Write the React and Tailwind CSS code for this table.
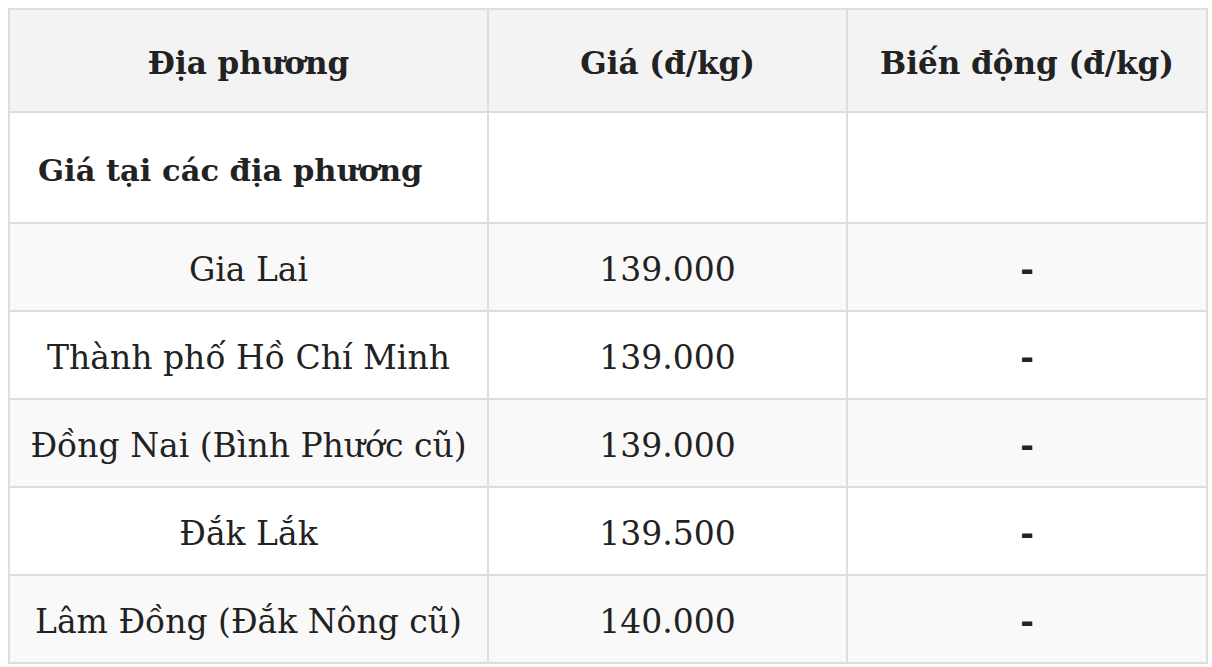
const rows = [
  { name: "Gia Lai", price: "139.000", change: "-" },
  { name: "Thành phố Hồ Chí Minh", price: "139.000", change: "-" },
  { name: "Đồng Nai (Bình Phước cũ)", price: "139.000", change: "-" },
  { name: "Đắk Lắk", price: "139.500", change: "-" },
  { name: "Lâm Đồng (Đắk Nông cũ)", price: "140.000", change: "-" },
];

export default function App() {
  return (
    <div className="bg-white w-[1212px] h-[667px] pt-[8px] pl-[8px] text-[#222] font-['DejaVu_Serif',serif]">
      <table className="w-[1198px] border-collapse border-2 border-[#dddddd] table-fixed">
        <colgroup>
          <col className="w-[479px]" />
          <col className="w-[359px]" />
          <col className="w-[360px]" />
        </colgroup>
        <thead>
          <tr className="h-[103px] bg-[#f3f3f3]">
            <th className="border-2 border-[#dddddd] text-[31px] font-bold pt-[6px]">Địa phương</th>
            <th className="border-2 border-[#dddddd] text-[31px] font-bold pt-[6px]">Giá (đ/kg)</th>
            <th className="border-2 border-[#dddddd] text-[31px] font-bold pt-[6px]">Biến động (đ/kg)</th>
          </tr>
        </thead>
        <tbody>
          <tr className="h-[111px] bg-white">
            <td className="border-2 border-[#dddddd] text-[30.5px] font-bold pl-[28px] pt-[6px]">Giá tại các địa phương</td>
            <td className="border-2 border-[#dddddd]"></td>
            <td className="border-2 border-[#dddddd]"></td>
          </tr>
          {rows.map((r, i) => (
            <tr key={r.name} className={i % 2 === 0 ? "h-[88px] bg-[#f9f9f9]" : "h-[88px] bg-white"}>
              <td className="border-2 border-[#dddddd] text-center text-[33px] pt-[6px]">{r.name}</td>
              <td className="border-2 border-[#dddddd] text-center text-[33px] pt-[6px]">{r.price}</td>
              <td className="border-2 border-[#dddddd] text-center text-[33px] font-bold pt-[6px]">{r.change}</td>
            </tr>
          ))}
        </tbody>
      </table>
    </div>
  );
}
